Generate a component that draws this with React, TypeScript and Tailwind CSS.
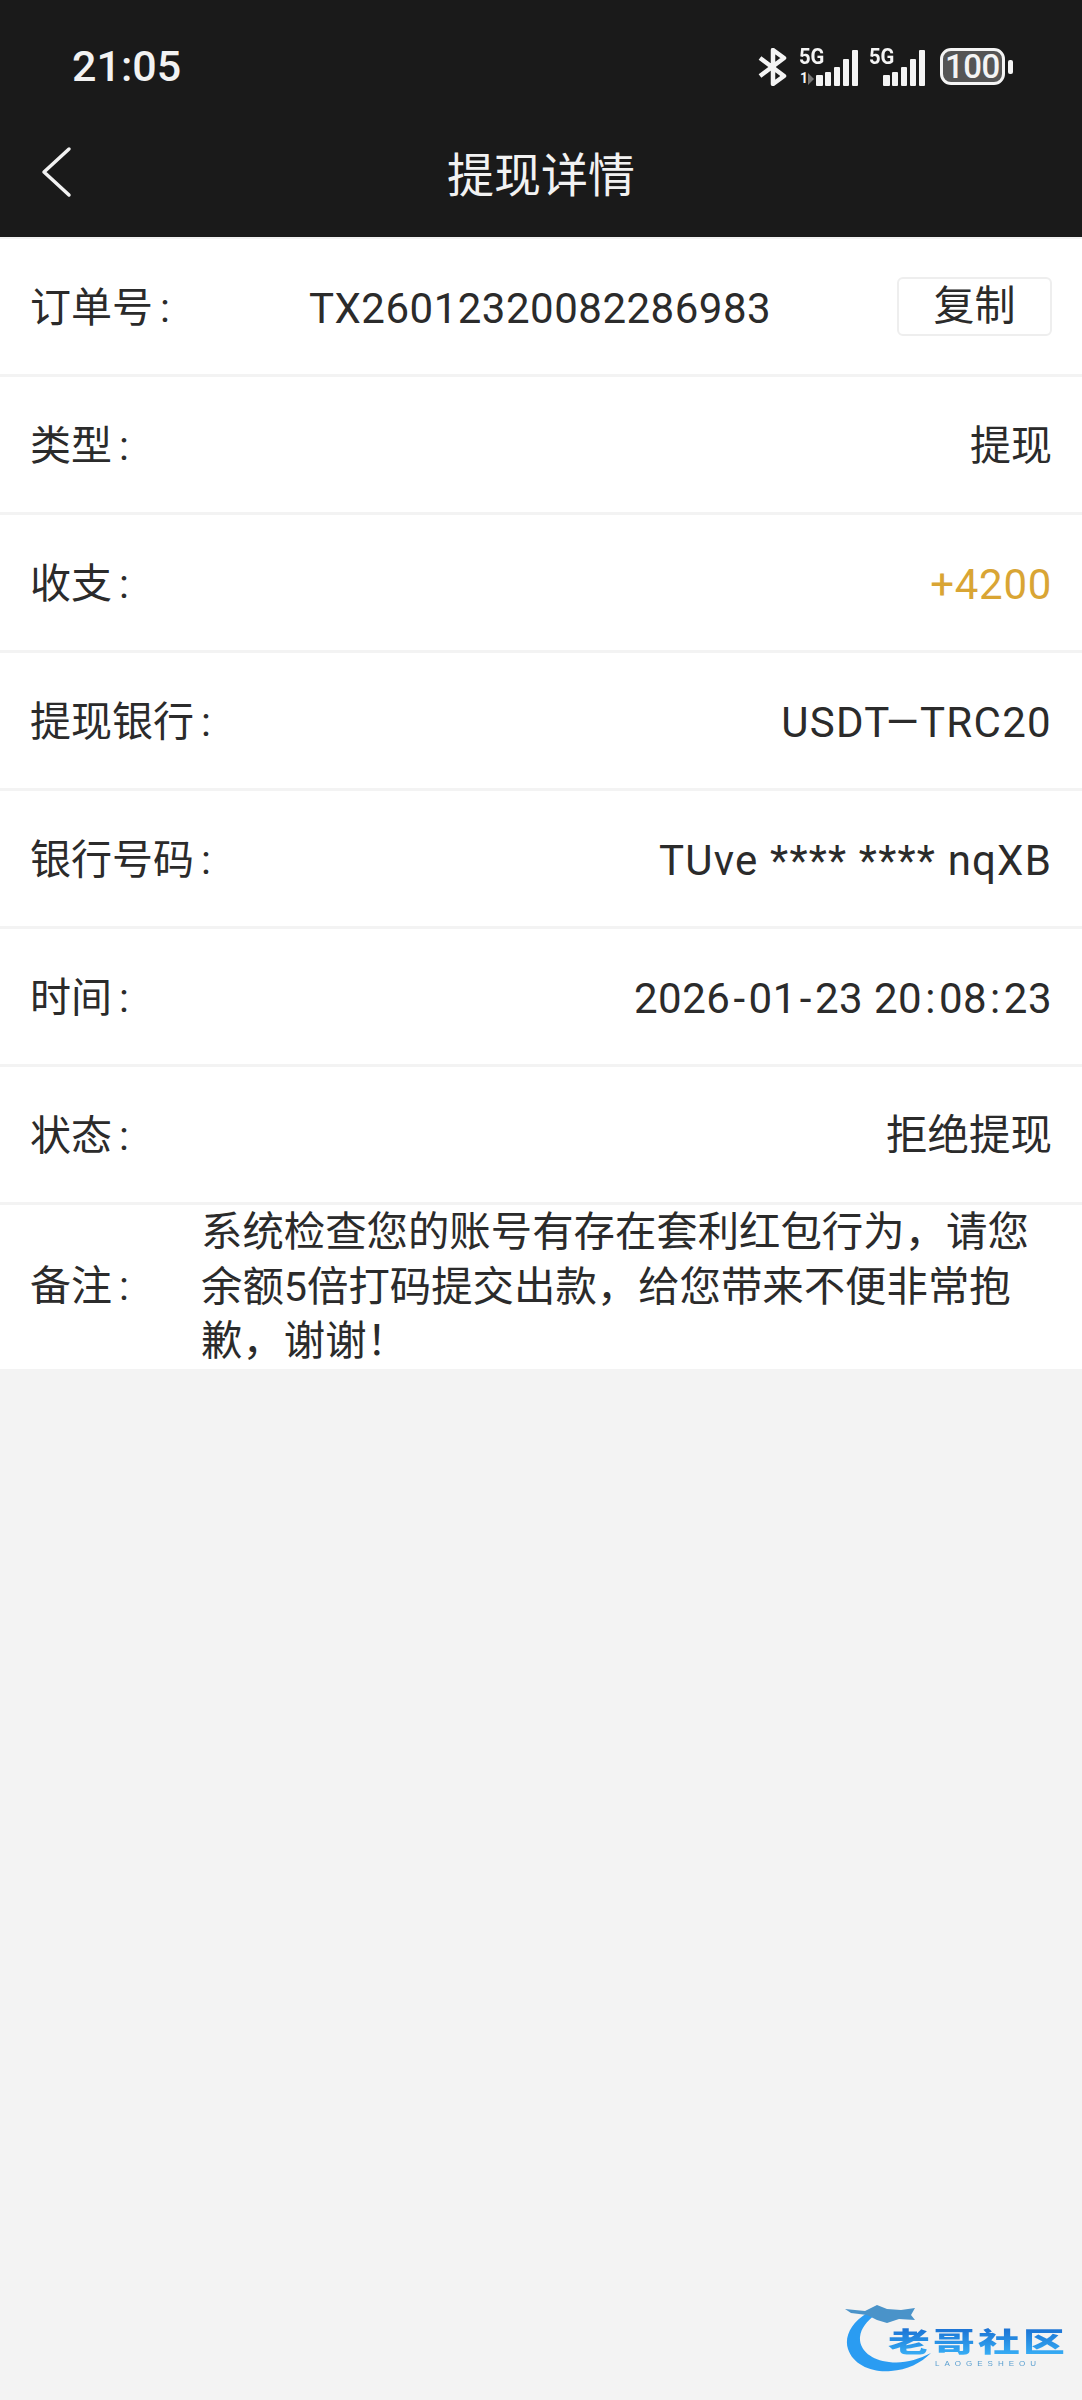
const Sep = ({ c }: { c: string }) => <span className="mx-[3px]">{c}</span>;

const rows = [
  { label: "类型", value: "提现", cls: "text-[41px]" },
  { label: "收支", value: "+4200", cls: "text-[42px] tracking-[0.7px] text-[#d9a534]" },
  { label: "提现银行", value: "USDT—TRC20", cls: "text-[42px] tracking-[1.3px]" },
  { label: "银行号码", value: "TUve **** **** nqXB", cls: "text-[42px] tracking-[1.2px]" },
  {
    label: "时间",
    value: (
      <>
        2026<Sep c="-" />01<Sep c="-" />23 20<Sep c=":" />08<Sep c=":" />23
      </>
    ),
    cls: "text-[42px] tracking-[0.5px]",
  },
  { label: "状态", value: "拒绝提现", cls: "text-[41.5px]" },
];

const font = "font-['Roboto','Noto_Sans_CJK_SC',sans-serif]";

const Label = ({ text }: { text: string }) => (
  <span className="pt-[4px] text-[41px]">
    {text}
    <span className="ml-[7px]">:</span>
  </span>
);

const Bars = () => {
  const bars = [11, 14, 19, 27, 36];
  return (
    <div className="flex items-end gap-[2.4px] h-[36px]">
      {bars.map((h, i) => (
        <div key={i} className="w-[6.5px] bg-[#f4f4f4] rounded-[1px]" style={{ height: h }} />
      ))}
    </div>
  );
};

const StatusIcons = () => (
  <div className="flex items-center text-[#f4f4f4]">
    <svg width="30" height="38" viewBox="0 0 30 38" fill="none" className="mr-[11px]">
      <path
        d="M2 10 L26 28 L15 36 V2 L26 10 L2 28"
        stroke="#f4f4f4"
        strokeWidth="4.5"
        strokeLinejoin="round"
      />
    </svg>
    <div className="relative w-[60px] h-[38px]">
      <span className="absolute left-0 top-[-3px] text-[22px] font-bold leading-[24px] scale-x-[0.92] origin-left">5G</span>
      <span className="absolute left-[1px] top-[23px] text-[14px] font-bold leading-[14px]">1</span>
      <svg width="8" height="12" viewBox="0 0 8 12" className="absolute left-[8px] top-[25px]">
        <path d="M1 0 L7 6 L1 12 Z" fill="#777" />
      </svg>
      <div className="absolute left-[17px] bottom-[0px]">
        <Bars />
      </div>
    </div>
    <div className="relative w-[56px] h-[38px] ml-[10px]">
      <span className="absolute left-0 top-[-3px] text-[22px] font-bold leading-[24px] scale-x-[0.92] origin-left">5G</span>
      <div className="absolute left-[14px] bottom-[0px]">
        <Bars />
      </div>
    </div>
    <div className="ml-[15px] w-[65px] h-[37px] rounded-[11px] border-[3px] border-[#f4f4f4] bg-[#555555] flex items-center justify-center">
      <span className="text-[33px] leading-none font-medium tracking-[-0.5px]">100</span>
    </div>
    <div className="ml-[3px] w-[5px] h-[14px] rounded-[2px] bg-[#f4f4f4]" />
  </div>
);

const Logo = () => (
  <div className="absolute left-[843px] top-[2303px] w-[222px] h-[72px] blur-[0.6px]">
    <svg width="222" height="72" viewBox="0 0 222 72" className="absolute left-0 top-0">
      <path
        d="M24 10 C8 20 1 34 5 46 C10 62 30 70 48 68 C64 67 78 60 88 50 C74 57 60 61 46 59 C28 57 16 47 17 34 C18 25 24 18 32 12 Z"
        fill="#2a9cf2"
      />
      <path
        d="M2 6 L22 8 L34 2 L44 6 L58 7 L72 5 L68 12 L72 17 L56 16 L44 20 L34 17 L24 12 L8 10 Z"
        fill="#4a93c9"
      />
    </svg>
    <div className="absolute left-[45px] top-[24px] flex w-[180px] h-[28px] font-['Noto_Sans_CJK_SC',sans-serif] font-black text-[27px] leading-[28px]">
      {["老", "哥", "社", "区"].map((c) => (
        <span key={c} className="w-[45px] scale-x-[1.55] origin-left bg-gradient-to-b from-[#1b6fd2] to-[#38aef5] bg-clip-text text-transparent">
          {c}
        </span>
      ))}
    </div>
    <div className="absolute left-[92px] top-[56px] font-['Liberation_Sans',sans-serif] text-[8px] leading-[9px] tracking-[5px] text-[#5a9fd0]">
      LAOGESHEOU
    </div>
  </div>
);

export default function App() {
  return (
    <div className={`relative w-[1082px] h-[2400px] bg-[#f3f3f3] ${font}`}>
      <div className="bg-[#1a1a1a] h-[237px] flex flex-col">
        <div className="flex items-center justify-between h-[132px] pl-[72px] pr-[69px] pt-[1px]">
          <span className="text-[43px] font-medium text-[#f2f2f2] leading-none">21:05</span>
          <StatusIcons />
        </div>
        <div className="relative flex items-center justify-center h-[84px] -mt-[2px] pt-[6px]">
          <svg width="34" height="52" viewBox="0 0 34 52" fill="none" className="absolute left-[40px] top-[16px]">
            <path d="M29 3 L4 26 L29 49" stroke="#f2f2f2" strokeWidth="3.5" strokeLinecap="round" strokeLinejoin="round" />
          </svg>
          <span className="text-[47px] leading-none text-[#f2f2f2]">提现详情</span>
        </div>
      </div>

      <div className="bg-white mt-[2px]">
        <div className="flex items-center h-[138px] border-b-[3px] border-[#f3f3f3] pl-[30px] pr-[30px] text-[#2b2b2b]">
          <Label text="订单号" />
          <span className="ml-[139px] pt-[4px] text-[42px] tracking-[0.5px]">TX26012320082286983</span>
          <button className="ml-auto w-[155px] h-[59px] rounded-[6px] border-2 border-[#eeeeee] text-[41px] leading-none text-[#2b2b2b]">
            复制
          </button>
        </div>
        {rows.map((row) => (
          <div
            key={row.label}
            className="flex items-center justify-between h-[138px] border-b-[3px] border-[#f3f3f3] px-[30px] text-[#2b2b2b]"
          >
            <Label text={row.label} />
            <span className={`pt-[4px] ${row.cls}`}>{row.value}</span>
          </div>
        ))}
        <div className="flex items-center h-[164px] pl-[30px] text-[#2b2b2b]">
          <span className="w-[171px]">
            <Label text="备注" />
          </span>
          <p className="w-[838px] text-[41.4px] leading-[54.5px]">
            系统检查您的账号有存在套利红包行为，请您余额5倍打码提交出款，给您带来不便非常抱歉，谢谢！
          </p>
        </div>
      </div>

      <Logo />
    </div>
  );
}
